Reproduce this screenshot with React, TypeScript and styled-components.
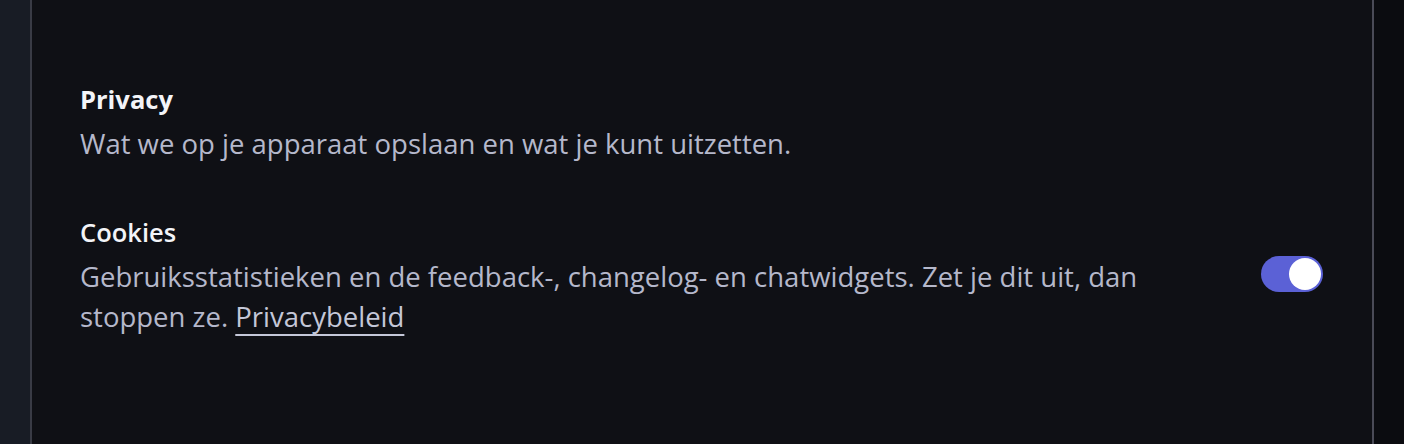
import { useState } from 'react';
import styled, { createGlobalStyle } from 'styled-components';

const GlobalStyle = createGlobalStyle`
	body {
		margin: 0;
		background: #0b0c10;
		font-family: "Open Sans", "Noto Sans", sans-serif;
		-webkit-font-smoothing: antialiased;
	}
`;

const Layout = styled.div`
	display: flex;
	height: 444px;
`;

const Sidebar = styled.div`
	width: 30px;
	flex-shrink: 0;
	background: #181c25;
`;

const Panel = styled.main`
	width: 1344px;
	flex-shrink: 0;
	box-sizing: border-box;
	padding: 83px 49px 0 48px;
	background: #0f1015;
	border-left: 2px solid #393b45;
	border-right: 2px solid #4a4b57;
`;

const Section = styled.section`
	display: flex;
	flex-direction: column;
	gap: 51px;
`;

const Title = styled.h2<{ $weight?: number }>`
	margin: 0;
	font-size: 25.5px;
	line-height: 32px;
	font-weight: ${p => p.$weight ?? 700};
	color: #f3f4f8;
`;

const Description = styled.p`
	margin: 9px 0 0;
	font-size: 27.5px;
	line-height: 40.5px;
	color: #b5b8cb;
`;

const Link = styled.a`
	color: #c4c7d8;
	text-decoration: underline;
	text-decoration-thickness: 1.5px;
	text-underline-offset: 7px;
	cursor: pointer;
`;

const Row = styled.div`
	display: flex;
	align-items: center;
	gap: 32px;
`;

const RowText = styled.div`
	flex: 1;
`;

const Switch = styled.button<{ $on: boolean }>`
	position: relative;
	width: 62px;
	height: 36px;
	flex-shrink: 0;
	margin-bottom: 6px;
	padding: 0;
	border: none;
	border-radius: 18px;
	background: ${p => p.$on ? '#5b61d6' : '#3a3c48'};
	cursor: pointer;
`;

const Knob = styled.span<{ $on: boolean }>`
	position: absolute;
	top: 2px;
	left: ${p => p.$on ? '28px' : '2px'};
	width: 32px;
	height: 32px;
	border-radius: 50%;
	background: #ffffff;
	transition: left 0.15s;
`;

export default function App() {
	const [cookies, setCookies] = useState(true);

	return <>
		<GlobalStyle />
		<Layout>
			<Sidebar />
			<Panel>
				<Section>
					<div>
						<Title>Privacy</Title>
						<Description>Wat we op je apparaat opslaan en wat je kunt uitzetten.</Description>
					</div>
					<Row>
						<RowText>
							<Title as="h3" $weight={600}>Cookies</Title>
							<Description>
								Gebruiksstatistieken en de feedback-, changelog- en chatwidgets. Zet je dit uit, dan
								stoppen ze. <Link>Privacybeleid</Link>
							</Description>
						</RowText>
						<Switch $on={cookies} onClick={() => setCookies(!cookies)} aria-label="Cookies">
							<Knob $on={cookies} />
						</Switch>
					</Row>
				</Section>
			</Panel>
		</Layout>
	</>;
}
